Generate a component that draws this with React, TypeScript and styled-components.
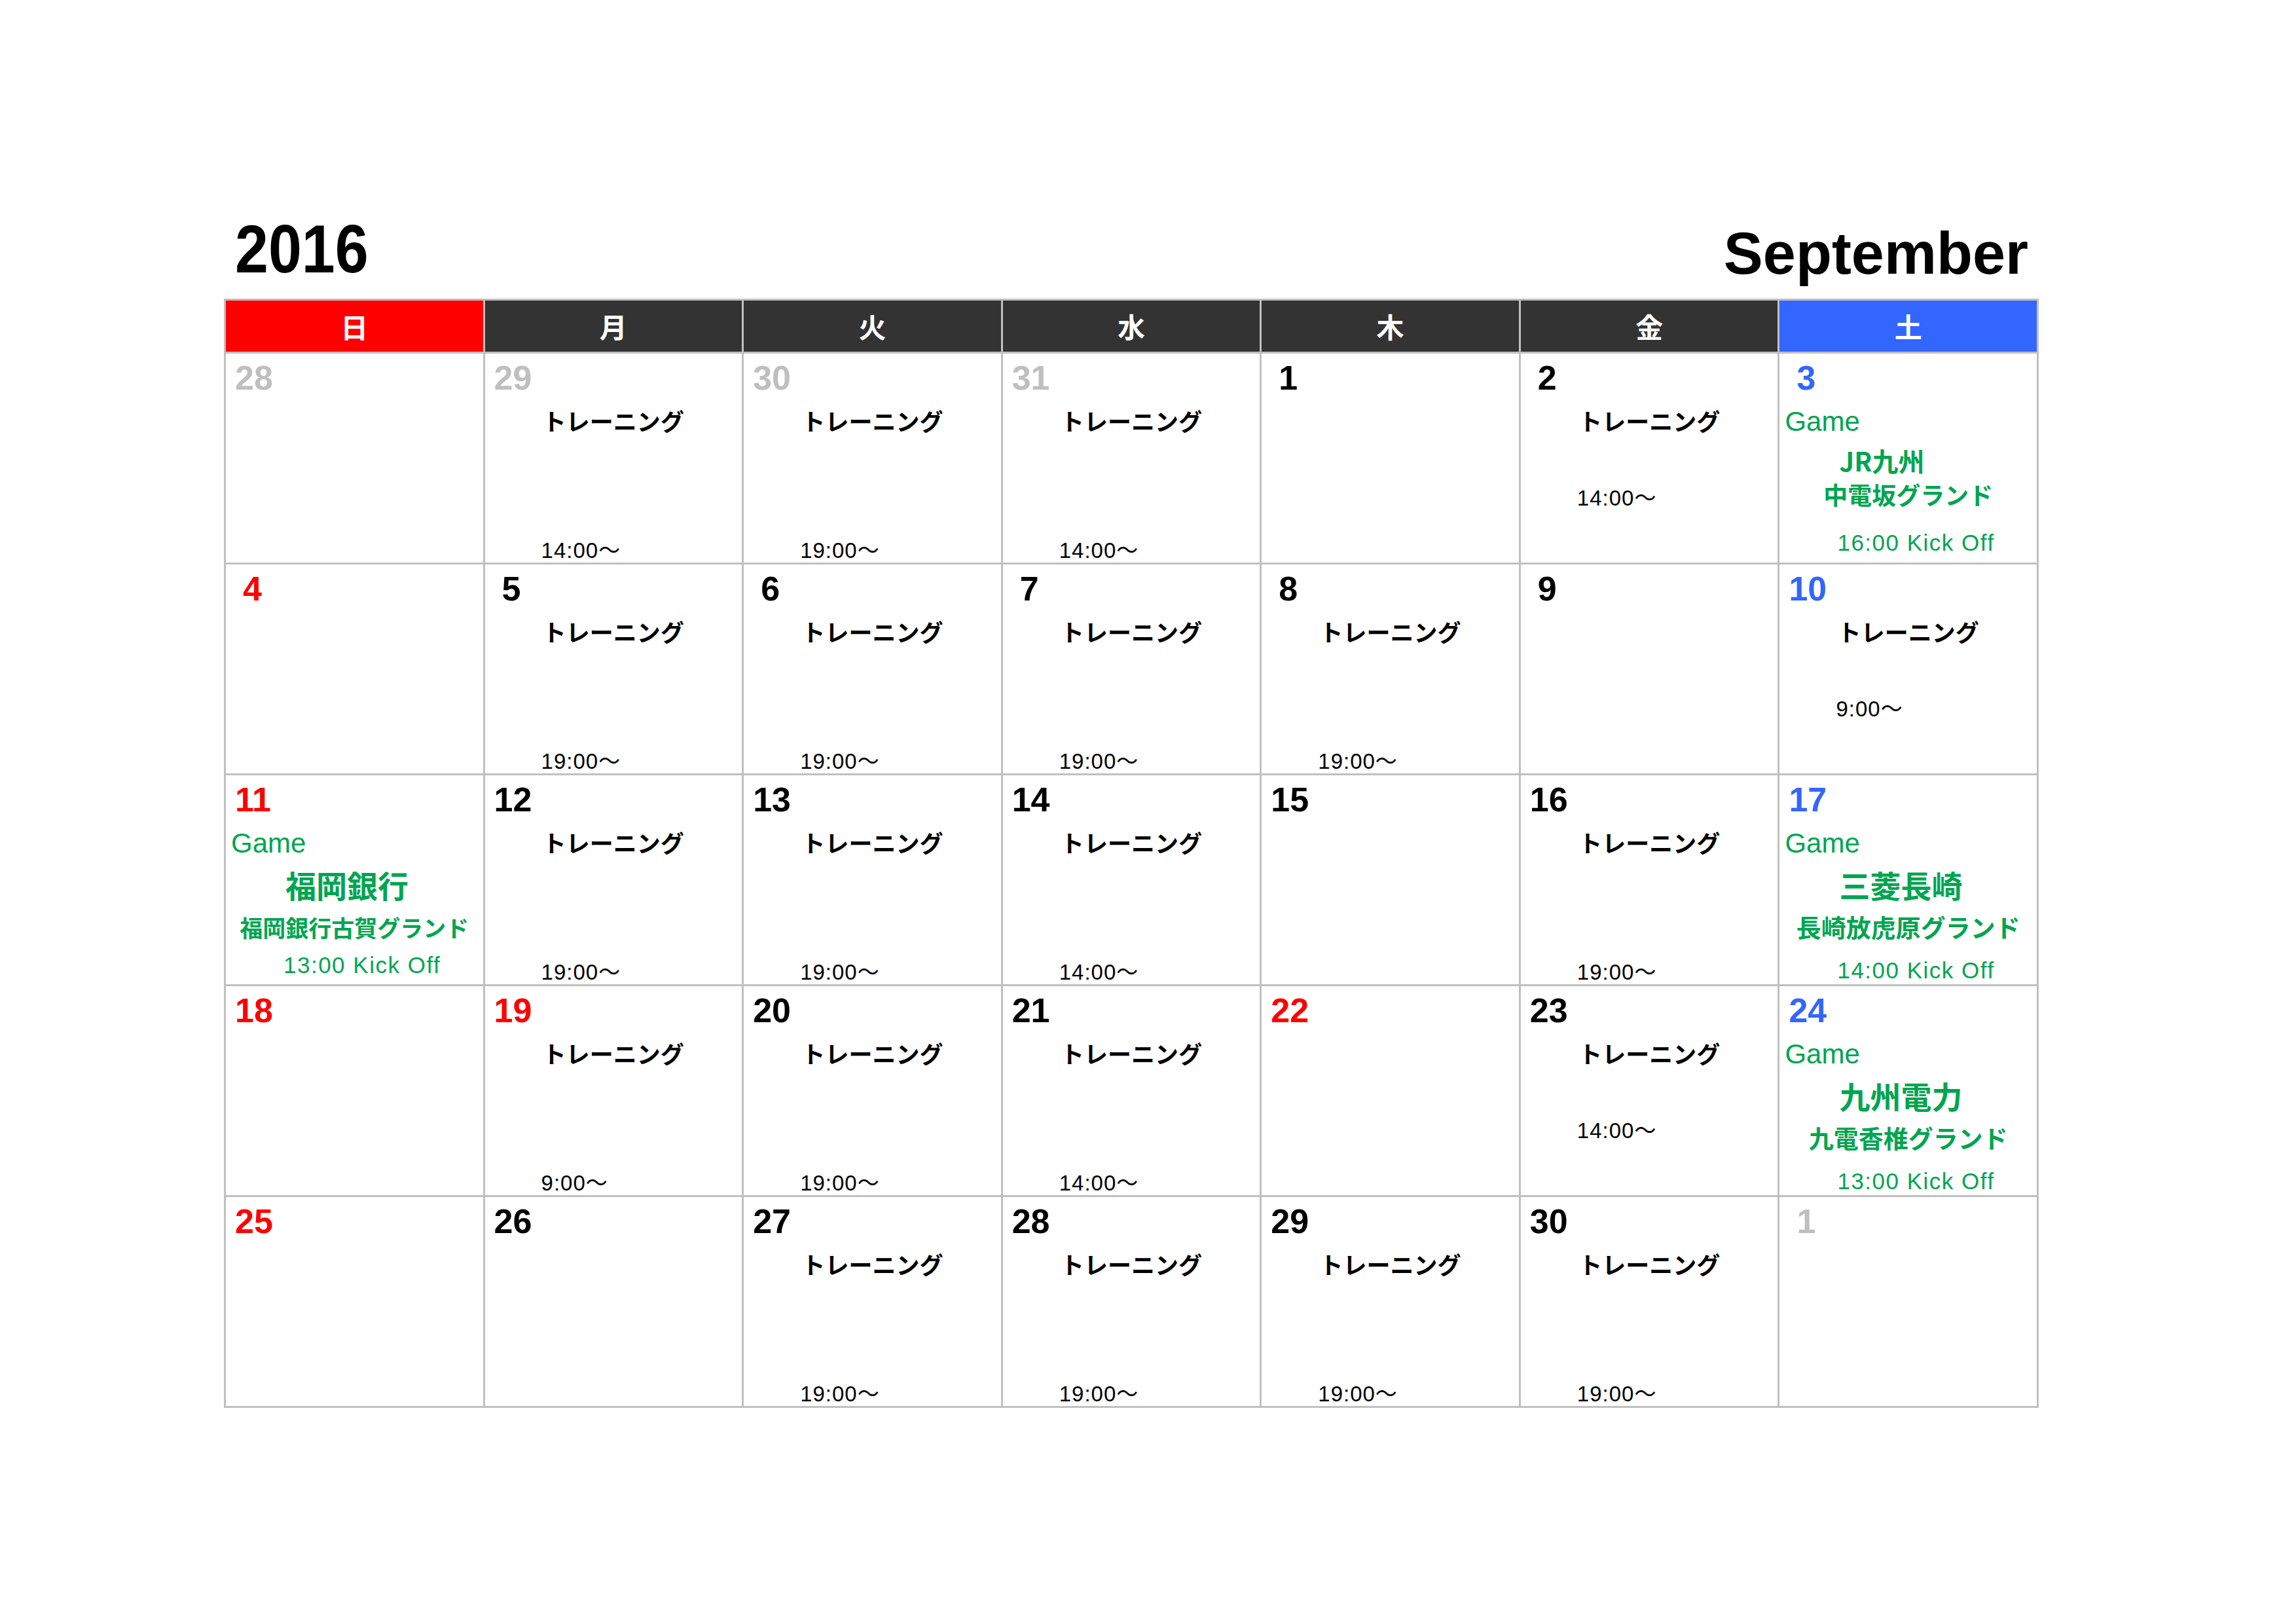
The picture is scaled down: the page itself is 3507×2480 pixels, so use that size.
import React from 'react';
import styled, { createGlobalStyle } from 'styled-components';

type Tone = 'gray' | 'red' | 'blue' | 'black';

type Training = { kind: 'training'; time: string; pos: 'mid' | 'bottom' };
type Game = {
  kind: 'game';
  team: string;
  venue: string;
  kick: string;
  teamSize: number;
  venueSize: number;
  venueGap: number;
  kickGap: number;
};
type Day = { n: number; tone: Tone; ev?: Training | Game };

const toneColor: Record<Tone, string> = {
  gray: '#bfbfbf',
  red: '#ff0000',
  blue: '#3366ff',
  black: '#000000',
};

const GREEN = '#00a550';
const LINE = '#c0c0c0';

const GlobalStyle = createGlobalStyle`
  html, body {
    margin: 0;
    padding: 0;
    background: #ffffff;
  }
  body {
    font-family: "Liberation Sans", "Noto Sans CJK JP", sans-serif;
  }
`;

const Page = styled.div`
  width: 3507px;
  height: 2480px;
  box-sizing: border-box;
  padding: 300px 0 0 342px;
  background: #ffffff;
`;

const Sheet = styled.div`
  width: 2772px;
`;

const TitleRow = styled.div`
  height: 156px;
  box-sizing: border-box;
  display: flex;
  justify-content: space-between;
  align-items: flex-end;
  padding: 0 16px 24px 17px;
  color: #000000;
`;

const Year = styled.div`
  font: 700 104px/1 "Liberation Sans", sans-serif;
  transform: scaleX(0.88);
  transform-origin: left bottom;
`;

const Month = styled.div`
  font: 700 90px/1 "Liberation Sans", sans-serif;
`;

const Grid = styled.div`
  display: grid;
  grid-template-columns: repeat(7, 1fr);
  grid-template-rows: 81px repeat(5, 322px);
  box-sizing: border-box;
  width: 2772px;
  border-top: 3px solid ${LINE};
  border-left: 3px solid ${LINE};
`;

const HeadCell = styled.div<{ $bg: string }>`
  background: ${(p) => p.$bg};
  border-right: 3px solid ${LINE};
  border-bottom: 3px solid ${LINE};
  display: flex;
  align-items: center;
  justify-content: center;
  color: #ffffff;
  font: 700 42px/1 "Noto Sans CJK JP", sans-serif;
`;

const DayCell = styled.div`
  border-right: 3px solid ${LINE};
  border-bottom: 3px solid ${LINE};
  display: flex;
  flex-direction: column;
  align-items: flex-start;
  padding-bottom: 2px;
  min-width: 0;
  overflow: hidden;
  background: #ffffff;
`;

const DateNum = styled.div<{ $tone: Tone; $single: boolean }>`
  margin: 11px 0 0 ${(p) => (p.$single ? 26 : 14)}px;
  font: 700 52px/1 "Liberation Sans", sans-serif;
  color: ${(p) => toneColor[p.$tone]};
`;

const TrainingLabel = styled.div`
  align-self: stretch;
  text-align: center;
  margin-top: 21px;
  font: 700 36px/1 "Noto Sans CJK JP", sans-serif;
  color: #000000;
  white-space: nowrap;
`;

const TimeLabel = styled.div<{ $pos: 'mid' | 'bottom' }>`
  margin: ${(p) => (p.$pos === 'bottom' ? 'auto 0 0 86px' : '84px 0 0 86px')};
  font: 400 33px/1 "Liberation Sans", "Noto Sans CJK JP", sans-serif;
  letter-spacing: 1px;
  color: #000000;
  white-space: nowrap;
`;

const GameTag = styled.div`
  margin: 19.5px 0 0 8px;
  font: 400 42px/1 "Liberation Sans", sans-serif;
  color: ${GREEN};
`;

const Team = styled.div<{ $size: number }>`
  margin: 18.5px 0 0 91px;
  font: 700 ${(p) => p.$size}px/1 "Noto Sans CJK JP", sans-serif;
  color: ${GREEN};
  white-space: nowrap;
`;

const Venue = styled.div<{ $size: number; $gap: number }>`
  align-self: center;
  margin-top: ${(p) => p.$gap}px;
  font: 700 ${(p) => p.$size}px/1 "Noto Sans CJK JP", sans-serif;
  color: ${GREEN};
  white-space: nowrap;
`;

const Kick = styled.div<{ $gap: number }>`
  margin: ${(p) => p.$gap}px 0 0 88px;
  font: 400 35px/1 "Liberation Sans", sans-serif;
  letter-spacing: 1.5px;
  color: ${GREEN};
  white-space: nowrap;
`;

const T = (time: string, pos: 'mid' | 'bottom' = 'bottom'): Training => ({
  kind: 'training',
  time,
  pos,
});

const weekdays: { label: string; bg: string }[] = [
  { label: '日', bg: '#ff0000' },
  { label: '月', bg: '#333333' },
  { label: '火', bg: '#333333' },
  { label: '水', bg: '#333333' },
  { label: '木', bg: '#333333' },
  { label: '金', bg: '#333333' },
  { label: '土', bg: '#3366ff' },
];

const weeks: Day[][] = [
  [
    { n: 28, tone: 'gray' },
    { n: 29, tone: 'gray', ev: T('14:00～') },
    { n: 30, tone: 'gray', ev: T('19:00～') },
    { n: 31, tone: 'gray', ev: T('14:00～') },
    { n: 1, tone: 'black' },
    { n: 2, tone: 'black', ev: T('14:00～', 'mid') },
    {
      n: 3,
      tone: 'blue',
      ev: {
        kind: 'game',
        team: 'JR九州',
        venue: '中電坂グランド',
        kick: '16:00 Kick Off',
        teamSize: 40,
        venueSize: 37,
        venueGap: 14,
        kickGap: 37,
      },
    },
  ],
  [
    { n: 4, tone: 'red' },
    { n: 5, tone: 'black', ev: T('19:00～') },
    { n: 6, tone: 'black', ev: T('19:00～') },
    { n: 7, tone: 'black', ev: T('19:00～') },
    { n: 8, tone: 'black', ev: T('19:00～') },
    { n: 9, tone: 'black' },
    { n: 10, tone: 'blue', ev: T('9:00～', 'mid') },
  ],
  [
    {
      n: 11,
      tone: 'red',
      ev: {
        kind: 'game',
        team: '福岡銀行',
        venue: '福岡銀行古賀グランド',
        kick: '13:00 Kick Off',
        teamSize: 47,
        venueSize: 35,
        venueGap: 24,
        kickGap: 23,
      },
    },
    { n: 12, tone: 'black', ev: T('19:00～') },
    { n: 13, tone: 'black', ev: T('19:00～') },
    { n: 14, tone: 'black', ev: T('14:00～') },
    { n: 15, tone: 'black' },
    { n: 16, tone: 'black', ev: T('19:00～') },
    {
      n: 17,
      tone: 'blue',
      ev: {
        kind: 'game',
        team: '三菱長崎',
        venue: '長崎放虎原グランド',
        kick: '14:00 Kick Off',
        teamSize: 47,
        venueSize: 38,
        venueGap: 22,
        kickGap: 30,
      },
    },
  ],
  [
    { n: 18, tone: 'red' },
    { n: 19, tone: 'red', ev: T('9:00～') },
    { n: 20, tone: 'black', ev: T('19:00～') },
    { n: 21, tone: 'black', ev: T('14:00～') },
    { n: 22, tone: 'red' },
    { n: 23, tone: 'black', ev: T('14:00～', 'mid') },
    {
      n: 24,
      tone: 'blue',
      ev: {
        kind: 'game',
        team: '九州電力',
        venue: '九電香椎グランド',
        kick: '13:00 Kick Off',
        teamSize: 47,
        venueSize: 38,
        venueGap: 22,
        kickGap: 30,
      },
    },
  ],
  [
    { n: 25, tone: 'red' },
    { n: 26, tone: 'black' },
    { n: 27, tone: 'black', ev: T('19:00～') },
    { n: 28, tone: 'black', ev: T('19:00～') },
    { n: 29, tone: 'black', ev: T('19:00～') },
    { n: 30, tone: 'black', ev: T('19:00～') },
    { n: 1, tone: 'gray' },
  ],
];

function EventBlock({ ev }: { ev: Training | Game }) {
  if (ev.kind === 'training') {
    return (
      <>
        <TrainingLabel>トレーニング</TrainingLabel>
        <TimeLabel $pos={ev.pos}>{ev.time}</TimeLabel>
      </>
    );
  }
  return (
    <>
      <GameTag>Game</GameTag>
      <Team $size={ev.teamSize}>{ev.team}</Team>
      <Venue $size={ev.venueSize} $gap={ev.venueGap}>
        {ev.venue}
      </Venue>
      <Kick $gap={ev.kickGap}>{ev.kick}</Kick>
    </>
  );
}

export default function App() {
  return (
    <>
      <GlobalStyle />
      <Page>
        <Sheet>
          <TitleRow>
            <Year>2016</Year>
            <Month>September</Month>
          </TitleRow>
          <Grid>
            {weekdays.map((w) => (
              <HeadCell key={w.label} $bg={w.bg}>
                {w.label}
              </HeadCell>
            ))}
            {weeks.map((week, wi) =>
              week.map((d, di) => (
                <DayCell key={`${wi}-${di}`}>
                  <DateNum $tone={d.tone} $single={d.n < 10}>
                    {d.n}
                  </DateNum>
                  {d.ev && <EventBlock ev={d.ev} />}
                </DayCell>
              ))
            )}
          </Grid>
        </Sheet>
      </Page>
    </>
  );
}
